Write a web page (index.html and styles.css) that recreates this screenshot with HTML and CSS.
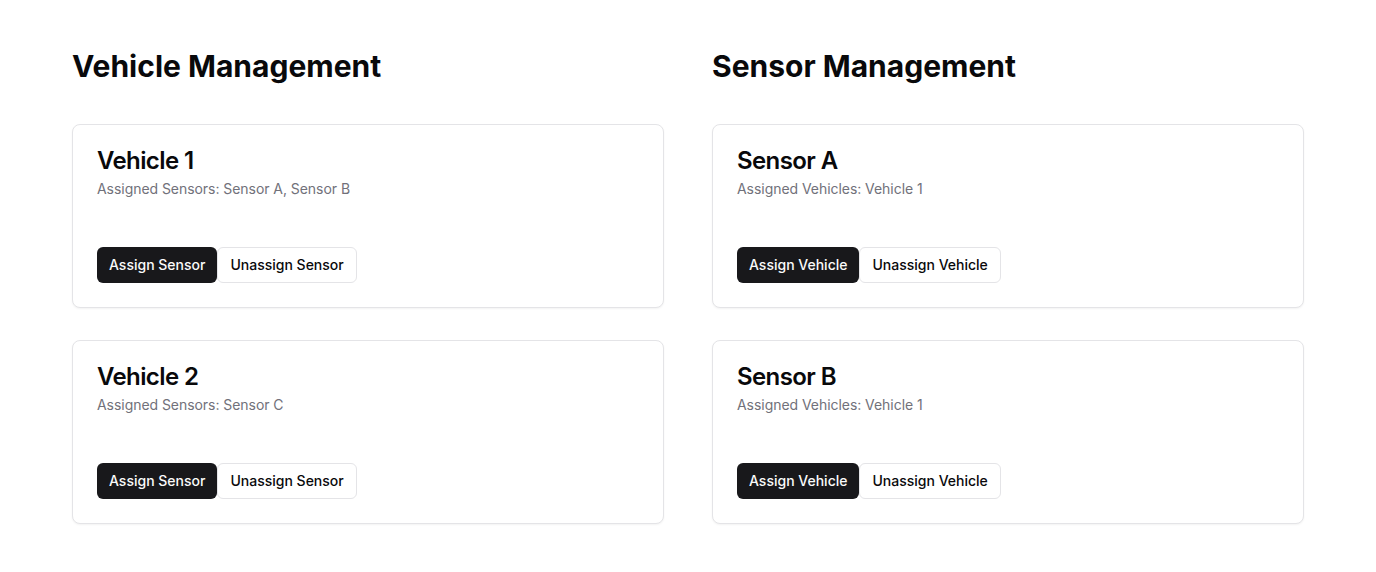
FILE: index.html
```html
<!DOCTYPE html>
<html lang="en">
<head>
<meta charset="utf-8">
<title>Management</title>
<link rel="stylesheet" href="styles.css">
</head>
<body>
<main class="page">
  <section class="column">
    <h1 class="section-title">Vehicle Management</h1>
    <div class="card-list">
      <div class="card">
        <div class="card-header">
          <h2 class="card-title">Vehicle 1</h2>
          <p class="card-desc">Assigned Sensors: Sensor A, Sensor B</p>
        </div>
        <div class="card-actions">
          <button class="btn btn-primary">Assign Sensor</button>
          <button class="btn btn-outline">Unassign Sensor</button>
        </div>
      </div>
      <div class="card">
        <div class="card-header">
          <h2 class="card-title">Vehicle 2</h2>
          <p class="card-desc">Assigned Sensors: Sensor C</p>
        </div>
        <div class="card-actions">
          <button class="btn btn-primary">Assign Sensor</button>
          <button class="btn btn-outline">Unassign Sensor</button>
        </div>
      </div>
    </div>
  </section>
  <section class="column">
    <h1 class="section-title">Sensor Management</h1>
    <div class="card-list">
      <div class="card">
        <div class="card-header">
          <h2 class="card-title">Sensor A</h2>
          <p class="card-desc">Assigned Vehicles: Vehicle 1</p>
        </div>
        <div class="card-actions">
          <button class="btn btn-primary">Assign Vehicle</button>
          <button class="btn btn-outline">Unassign Vehicle</button>
        </div>
      </div>
      <div class="card">
        <div class="card-header">
          <h2 class="card-title">Sensor B</h2>
          <p class="card-desc">Assigned Vehicles: Vehicle 1</p>
        </div>
        <div class="card-actions">
          <button class="btn btn-primary">Assign Vehicle</button>
          <button class="btn btn-outline">Unassign Vehicle</button>
        </div>
      </div>
    </div>
  </section>
</main>
</body>
</html>
```
FILE: styles.css
```css
* { box-sizing: border-box; }
html, body { margin: 0; padding: 0; background: #ffffff; }
body {
  font-family: Inter, "Noto Sans", sans-serif;
  color: #09090b;
}
.page {
  max-width: 1280px;
  margin: 0 auto;
  padding: 48px 24px;
  display: grid;
  grid-template-columns: 1fr 1fr;
  gap: 48px;
}
.section-title {
  margin: 0 0 40px;
  font-size: 30px;
  line-height: 36px;
  font-weight: 700;
}
.card-list {
  display: flex;
  flex-direction: column;
  gap: 32px;
}
.card {
  border: 1px solid #e4e4e7;
  border-radius: 8px;
  background: #fff;
  box-shadow: 0 1px 2px rgba(0,0,0,0.05);
}
.card-header {
  padding: 24px;
  display: flex;
  flex-direction: column;
  gap: 6px;
}
.card-title {
  margin: 0;
  font-size: 24px;
  line-height: 24px;
  font-weight: 600;
  letter-spacing: -0.6px;
}
.card-desc {
  margin: 0;
  font-size: 14px;
  line-height: 20px;
  color: #71717a;
  letter-spacing: -0.05px;
}
.card-actions {
  padding: 24px;
  display: flex;
  gap: 0;
}
.btn {
  height: 36px;
  padding: 0 12px;
  font-family: inherit;
  font-size: 14px;
  font-weight: 500;
  border-radius: 6px;
  cursor: pointer;
  line-height: 20px;
}
.btn-primary {
  background: #18181b;
  color: #fafafa;
  border: none;
}
.btn-outline {
  background: #fff;
  color: #09090b;
  border: 1px solid #e4e4e7;
}
```
